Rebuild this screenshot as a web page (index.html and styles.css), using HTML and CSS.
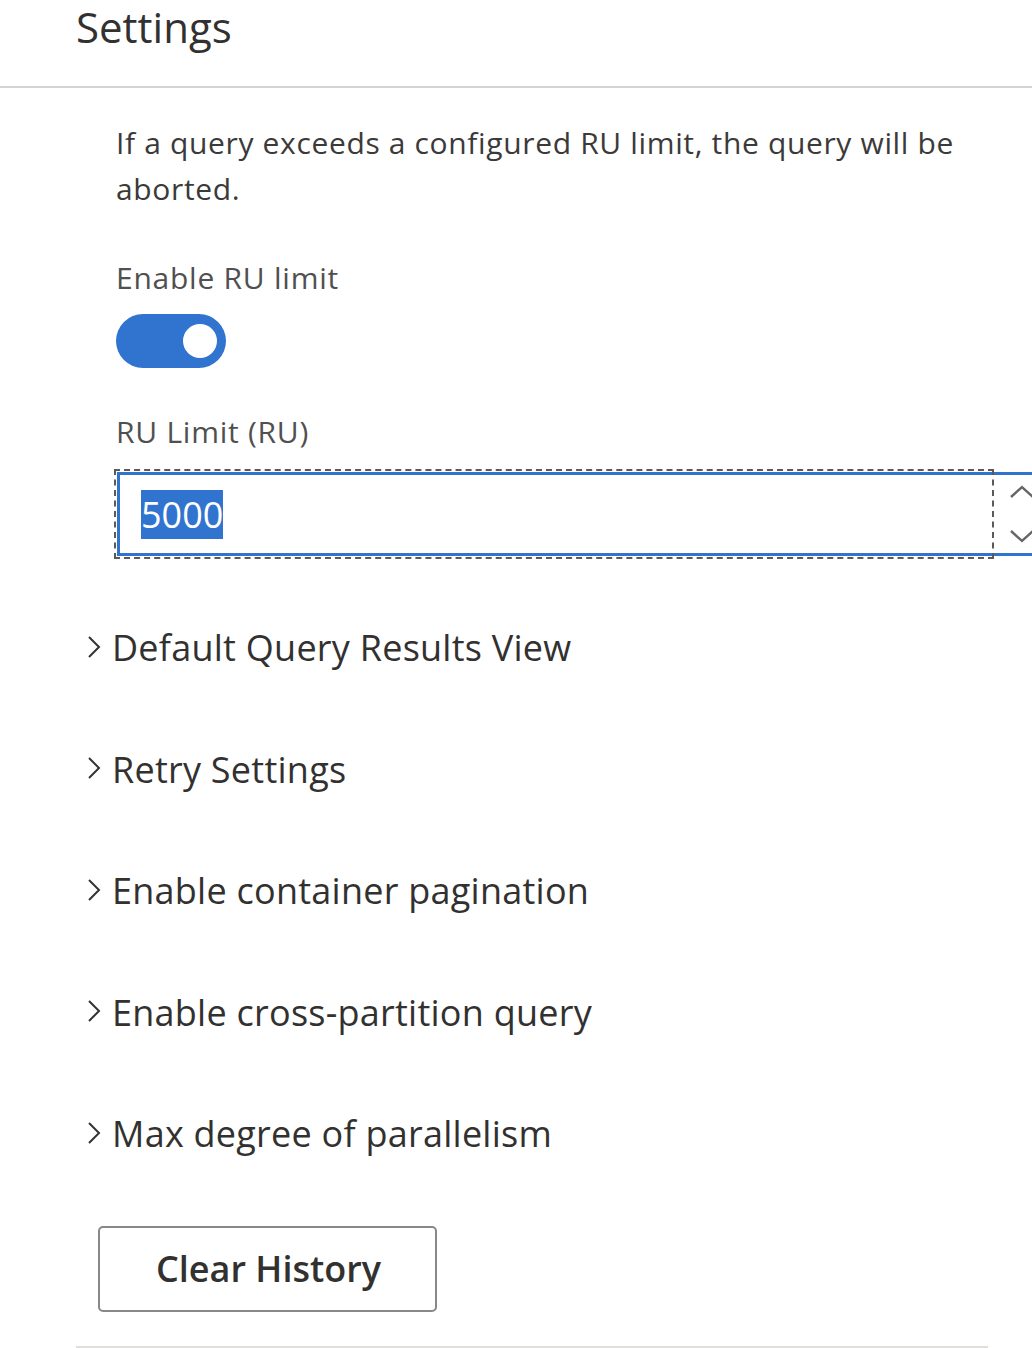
FILE: index.html
```html
<!DOCTYPE html>
<html lang="en">
<head>
<meta charset="utf-8">
<title>Settings</title>
<link rel="stylesheet" href="styles.css">
</head>
<body>
<header class="pane-header">
  <h1 class="pane-title">Settings</h1>
</header>
<main class="pane-body">
  <section class="ru-section">
    <p class="ru-desc">If a query exceeds a configured RU limit, the query will be aborted.</p>
    <div class="field-label">Enable RU limit</div>
    <div class="toggle" role="switch" aria-checked="true"><span class="toggle-knob"></span></div>
    <div class="field-label field-label--second">RU Limit (RU)</div>
    <div class="spin">
      <div class="spin-input"><span class="spin-value">5000</span></div>
      <div class="spin-arrows">
        <svg class="spin-arrow" width="26" height="14" viewBox="0 0 26 14"><path d="M2 12 L13 2 L24 12" fill="none" stroke="#666" stroke-width="2.4"/></svg>
        <svg class="spin-arrow" width="26" height="14" viewBox="0 0 26 14"><path d="M2 2 L13 12 L24 2" fill="none" stroke="#666" stroke-width="2.4"/></svg>
      </div>
    </div>
  </section>
  <section class="accordion">
    <div class="acc-row"><svg class="acc-chev" width="18" height="24" viewBox="0 0 18 24"><path d="M3 2 L13 12 L3 22" fill="none" stroke="#333" stroke-width="2"/></svg><span class="acc-title">Default Query Results View</span></div>
    <div class="acc-row"><svg class="acc-chev" width="18" height="24" viewBox="0 0 18 24"><path d="M3 2 L13 12 L3 22" fill="none" stroke="#333" stroke-width="2"/></svg><span class="acc-title">Retry Settings</span></div>
    <div class="acc-row"><svg class="acc-chev" width="18" height="24" viewBox="0 0 18 24"><path d="M3 2 L13 12 L3 22" fill="none" stroke="#333" stroke-width="2"/></svg><span class="acc-title">Enable container pagination</span></div>
    <div class="acc-row"><svg class="acc-chev" width="18" height="24" viewBox="0 0 18 24"><path d="M3 2 L13 12 L3 22" fill="none" stroke="#333" stroke-width="2"/></svg><span class="acc-title">Enable cross-partition query</span></div>
    <div class="acc-row"><svg class="acc-chev" width="18" height="24" viewBox="0 0 18 24"><path d="M3 2 L13 12 L3 22" fill="none" stroke="#333" stroke-width="2"/></svg><span class="acc-title">Max degree of parallelism</span></div>
  </section>
  <div class="actions">
    <button class="btn" type="button">Clear History</button>
  </div>
  <div class="divider"></div>
</main>
</body>
</html>
```
FILE: styles.css
```css
html, body {
  margin: 0;
  padding: 0;
  background: #ffffff;
}
body {
  font-family: "Open Sans", "Noto Sans", sans-serif;
  color: #323130;
  overflow: hidden;
  width: 1032px;
}
.pane-header {
  height: 86px;
  border-bottom: 2px solid #d4d4d4;
  padding-left: 76px;
  box-sizing: content-box;
}
.pane-title {
  margin: 0;
  padding-top: 2px;
  font-size: 42px;
  line-height: 50px;
  font-weight: 400;
  color: #323130;
}
.pane-body {
  margin-left: 76px;
  width: 912px;
}
.ru-section {
  padding-left: 40px;
  padding-top: 32px;
}
.ru-desc {
  margin: 0;
  font-size: 30px;
  line-height: 46px;
  color: #3b3a39;
  letter-spacing: 0.65px;
  max-width: 870px;
}
.field-label {
  margin-top: 43px;
  font-size: 30px;
  line-height: 46px;
  color: #505050;
  letter-spacing: 0.75px;
}
.field-label--second {
  margin-top: 41px;
}
.toggle {
  margin-top: 13px;
  width: 110px;
  height: 54px;
  border-radius: 27px;
  background: #3174d0;
  display: flex;
  align-items: center;
  justify-content: flex-end;
  padding-right: 9px;
  box-sizing: border-box;
}
.toggle-knob {
  width: 34px;
  height: 34px;
  border-radius: 50%;
  background: #ffffff;
}
.spin {
  margin-top: 17px;
  margin-left: 1px;
  position: relative;
  display: flex;
  width: 960px;
  height: 84px;
  border: 3px solid #3174d0;
  border-right: none;
  box-sizing: border-box;
}
.spin::after {
  content: "";
  position: absolute;
  left: -6px;
  top: -6px;
  width: 880px;
  height: 90px;
  border: 2px dashed #5a5a5a;
  box-sizing: border-box;
}
.spin-input {
  width: 872px;
  display: flex;
  align-items: center;
  padding-left: 21px;
  box-sizing: border-box;
}
.spin-value {
  background: #3174d0;
  color: #ffffff;
  font-size: 36px;
  line-height: 49px;
}
.spin-arrows {
  display: flex;
  flex-direction: column;
  justify-content: space-between;
  padding: 10px 0 10px 17px;
}
.spin-arrow {
  display: block;
}
.accordion {
  margin-top: 31px;
  padding-left: 10px;
}
.acc-row {
  height: 121.5px;
  display: flex;
  align-items: center;
}
.acc-chev {
  display: block;
  margin-top: -2px;
  margin-right: 8px;
}
.acc-title {
  font-size: 36px;
  line-height: 50px;
  color: #323130;
  letter-spacing: 0.25px;
  margin-top: 1px;
}
.actions {
  padding-top: 31px;
  padding-left: 22px;
}
.btn {
  width: 339px;
  height: 86px;
  border: 2px solid #8a8886;
  border-radius: 5px;
  background: #ffffff;
  font-family: "Open Sans", "Noto Sans", sans-serif;
  font-size: 36px;
  font-weight: 600;
  color: #323130;
  padding: 0 0 0 2px;
}
.divider {
  margin-top: 34px;
  border-top: 2px solid #e1dfdd;
}
```
